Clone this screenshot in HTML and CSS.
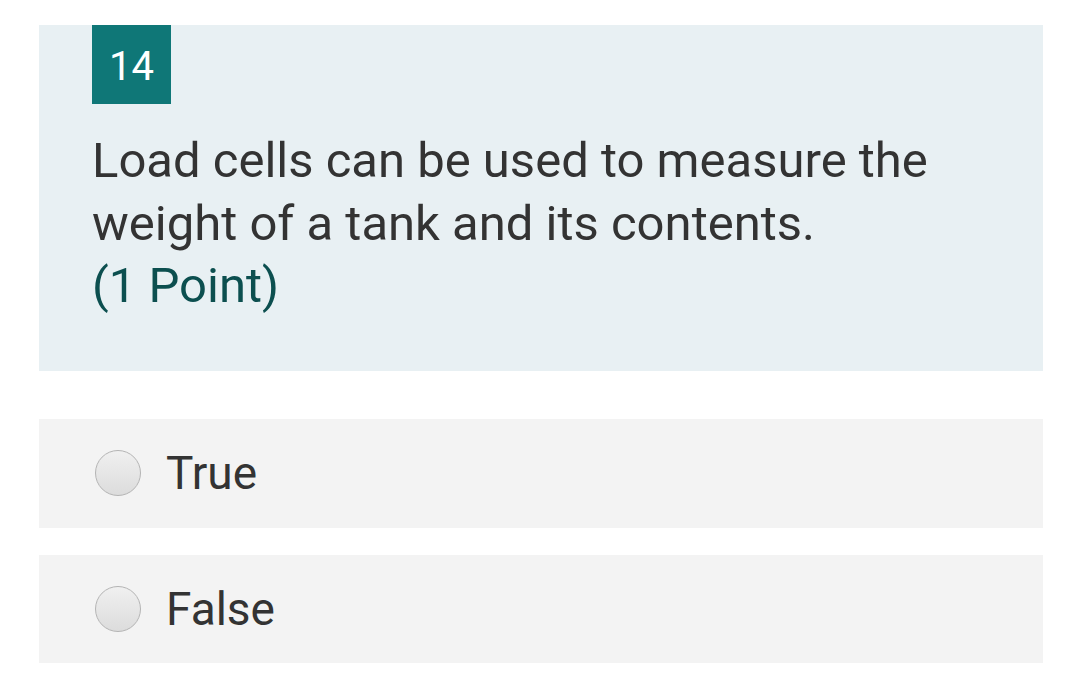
FILE: index.html
```html
<!DOCTYPE html>
<html>
<head>
<meta charset="utf-8">
<link rel="stylesheet" href="styles.css">
</head>
<body>
<div class="page">
  <section class="question">
    <div class="badge">14</div>
    <div class="qtext">Load cells can be used to measure the weight of a tank and its contents.<br><span class="points">(1 Point)</span></div>
  </section>
  <div class="options">
    <label class="option"><span class="radio"></span><span class="label">True</span></label>
    <label class="option"><span class="radio"></span><span class="label">False</span></label>
  </div>
</div>
</body>
</html>
```
FILE: styles.css
```css
html, body {
  margin: 0;
  padding: 0;
  background: #ffffff;
}
body {
  font-family: Roboto, "Liberation Sans", sans-serif;
  color: #333333;
}
.page {
  padding: 25px 0 0 39px;
  width: 1004px;
}
.question {
  background: #e8f0f3;
  padding: 0 60px 0 53px;
  height: 346px;
  box-sizing: border-box;
}
.badge {
  width: 79px;
  height: 79px;
  background: #0f7777;
  color: #ffffff;
  font-size: 40px;
  padding-top: 3px;
  box-sizing: border-box;
  display: flex;
  align-items: center;
  justify-content: center;
}
.qtext {
  margin-top: 26px;
  font-size: 49px;
  line-height: 62.5px;
  color: #333333;
}
.points {
  color: #0c4f4f;
}
.options {
  margin-top: 48px;
  display: flex;
  flex-direction: column;
  gap: 27px;
}
.option {
  background: #f3f3f3;
  height: 108.5px;
  display: flex;
  align-items: center;
  padding-left: 56px;
}
.radio {
  width: 44px;
  height: 44px;
  border-radius: 50%;
  border: 1px solid #b4b4b4;
  background: linear-gradient(#f0f0f0, #dcdcdc);
  flex: none;
}
.label {
  margin-left: 25px;
  font-size: 46px;
  color: #333333;
}
```
